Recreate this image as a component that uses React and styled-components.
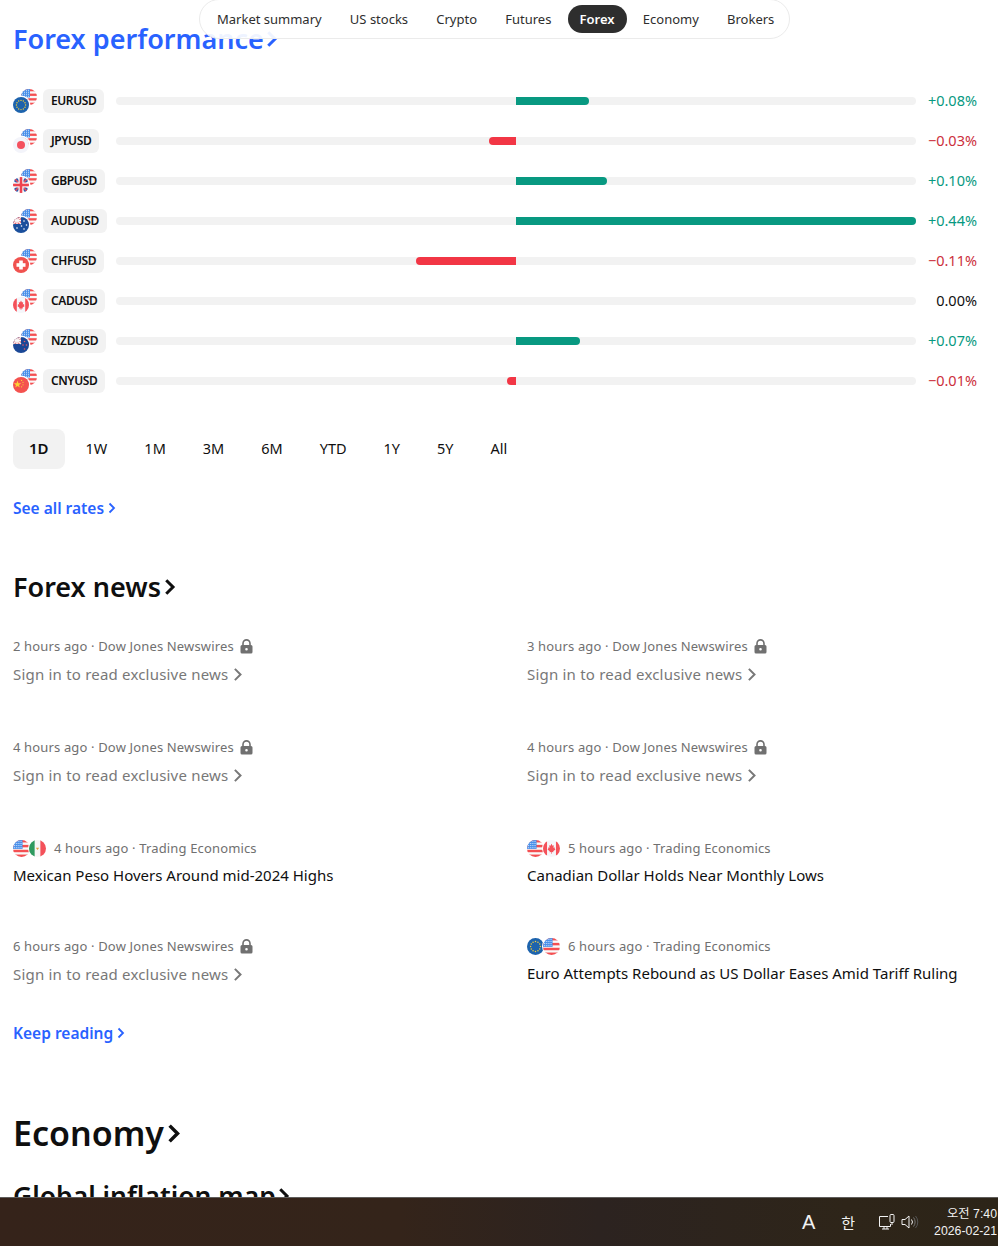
import React from "react";
import styled, { createGlobalStyle } from "styled-components";

const Global = createGlobalStyle`
  html, body { margin: 0; padding: 0; height: 100%; background: #fff; }
  body { font-family: "Noto Sans", "Liberation Sans", sans-serif; color: #0f0f0f; }
  #root { height: 100%; }
`;

const Screen = styled.div`
  position: relative;
  width: 998px;
  height: 1246px;
  display: flex;
  flex-direction: column;
  overflow: hidden;
`;
const Main = styled.main`
  flex: 1;
  min-height: 0;
  overflow: hidden;
  padding: 0 21px 0 13px;
  display: flex;
  flex-direction: column;
`;
const Nav = styled.nav`
  position: absolute;
  left: 199px;
  top: -1px;
  width: 591px;
  height: 40px;
  box-sizing: border-box;
  padding: 0 5px;
  display: flex;
  align-items: center;
  gap: 4.2px;
  background: rgba(255,255,255,.92);
  border: 1px solid #ebebeb;
  border-radius: 20px;
`;
const NavItem = styled.span`
  height: 28px;
  line-height: 28px;
  padding: 0 12px;
  border-radius: 14px;
  font-size: 13px;
  white-space: nowrap;
  color: ${p => (p.$active ? "#fff" : "#2e2e2e")};
  background: ${p => (p.$active ? "#2e2e2e" : "transparent")};
  font-weight: ${p => (p.$active ? 600 : 400)};
`;
const H1 = styled.h2`
  margin: 0;
  font-size: 27px;
  line-height: 36px;
  font-weight: 600;
  color: ${p => p.$color || "#0f0f0f"};
  display: flex;
  align-items: center;
`;
const PerfTitle = styled(H1)`
  margin-top: 21px;
  margin-bottom: 24px;
`;
const Chevron = styled.svg`
  flex: none;
  margin-left: ${p => p.$ml ?? 2}px;
`;
const Rows = styled.div`
  display: flex;
  flex-direction: column;
`;
const Row = styled.div`
  height: 40px;
  display: flex;
  align-items: center;
`;
const Pair = styled.div`
  position: relative;
  width: 24px;
  height: 24px;
  flex: none;
  margin-right: 6px;
`;
const PillWrap = styled.div`
  width: 73px;
  flex: none;
  display: flex;
  align-items: center;
`;
const Pill = styled.span`
  height: 24px;
  line-height: 23px;
  padding: 0 8px;
  border-radius: 6px;
  background: #f2f2f2;
  font-size: 12px;
  letter-spacing: -0.4px;
  font-weight: 600;
  color: #0f0f0f;
`;
const Track = styled.div`
  position: relative;
  width: 800px;
  height: 8px;
  flex: none;
  border-radius: 4px;
  background: #f2f2f2;
`;
const Fill = styled.div`
  position: absolute;
  top: 0;
  bottom: 0;
  background: ${p => (p.$up ? "#089981" : "#f23645")};
  ${p => (p.$up ? "left: 50%; border-radius: 0 4px 4px 0;" : "right: 50%; border-radius: 4px 0 0 4px;")}
`;
const Pct = styled.div`
  flex: 1;
  text-align: right;
  font-size: 14.5px;
  padding-bottom: 2px;
  color: ${p => (p.$v > 0 ? "#089981" : p.$v < 0 ? "#cc2f3c" : "#0f0f0f")};
`;
const Ranges = styled.div`
  margin-top: 28px;
  display: flex;
  gap: 5px;
`;
const Range = styled.span`
  height: 40px;
  line-height: 38px;
  padding: 0 16px;
  border-radius: 8px;
  font-size: ${p => (p.$active ? 15 : 14.5)}px;
  color: #0f0f0f;
  background: ${p => (p.$active ? "#f2f2f2" : "transparent")};
  font-weight: ${p => (p.$active ? 600 : 400)};
`;
const More = styled.a`
  display: flex;
  align-items: center;
  font-size: 15.5px;
  line-height: 24px;
  font-weight: 600;
  color: #2962ff;
`;
const SeeAll = styled(More)`
  margin-top: 27px;
`;
const NewsTitle = styled(H1)`
  margin-top: 49px;
`;
const News = styled.div`
  margin-top: 31px;
  display: grid;
  grid-template-columns: 514px 1fr;
`;
const Story = styled.article`
  height: ${p => p.$h}px;
`;
const Meta = styled.div`
  display: flex;
  align-items: center;
  height: 20px;
  font-size: 13px;
  letter-spacing: 0.15px;
  color: #707070;
  white-space: nowrap;
`;
const Headline = styled.div`
  margin-top: ${p => (p.$locked ? 7 : 6)}px;
  font-size: 15px;
  line-height: 22px;
  letter-spacing: ${p => (p.$locked ? 0.2 : 0)}px;
  white-space: nowrap;
  display: flex;
  align-items: center;
  color: ${p => (p.$locked ? "#787878" : "#0f0f0f")};
`;
const FlagGroup = styled.div`
  display: flex;
  flex: none;
  margin-right: 8px;
`;
const FlagCircle = styled.svg`
  display: block;
  flex: none;
  border-radius: 50%;
  overflow: hidden;
`;
const OverlapFlag = styled(FlagCircle)`
  margin-left: ${p => (p.$second ? -1 : 0)}px;
  box-shadow: ${p => (p.$second ? "0 0 0 1px #fff" : "none")};
  position: relative;
`;
const PairBack = styled(FlagCircle)`
  position: absolute;
  right: 0;
  top: 0;
`;
const PairFront = styled(FlagCircle)`
  position: absolute;
  left: 0;
  bottom: 0;
  box-shadow: 0 0 0 1.5px #fff;
`;
const Lock = styled.svg`
  margin-left: 6px;
  flex: none;
`;
const KeepReading = styled(More)`
  margin-top: 7px;
`;
const Economy = styled(H1)`
  margin-top: 66px;
  font-size: 34px;
  line-height: 44px;
`;
const SubTitle = styled(H1)`
  margin-top: 25px;
  font-size: 26.5px;
  line-height: 32px;
`;
const Taskbar = styled.footer`
  height: 49px;
  flex: none;
  box-sizing: border-box;
  border-top: 1px solid #5f5d5b;
  background: linear-gradient(90deg, #35231a 0%, #34241a 40%, #2c2320 60%, #2e2519 85%, #2c2418 100%);
  display: flex;
  align-items: center;
  justify-content: flex-end;
  color: #fff;
  font-family: "Noto Sans CJK KR", "Liberation Sans", sans-serif;
`;
const TrayText = styled.span`
  font-size: ${p => p.$size}px;
  font-family: ${p => (p.$latin ? '"Liberation Sans", sans-serif' : "inherit")};
  margin-right: ${p => p.$mr}px;
  color: #f2f2f2;
`;
const TrayIcon = styled.svg`
  flex: none;
  margin-right: ${p => p.$mr}px;
`;
const Clock = styled.div`
  display: flex;
  flex-direction: column;
  align-items: flex-end;
  font-size: 12.3px;
  line-height: 17px;
  color: #f2f2f2;
  font-family: "Liberation Sans", "Noto Sans CJK KR", sans-serif;
  margin: 2px 1px 0 0;
`;

const US = () => (
  <g>
    <rect width="16" height="16" fill="#f9f9f9" />
    <rect y="0" width="16" height="2.3" fill="#f44f52" />
    <rect y="4.6" width="16" height="2.3" fill="#f44f52" />
    <rect y="9.2" width="16" height="2.3" fill="#f44f52" />
    <rect y="13.7" width="16" height="2.3" fill="#f44f52" />
    <rect width="9" height="8.4" fill="#4a90ea" />
    {[1.5, 3.5, 5.5, 7.5].map(x => [1.2, 3.2, 5.2, 7.2].map(y => <rect key={x + "-" + y} x={x - .4} y={y - .4} width=".9" height=".9" fill="#e8f1fd" />))}
  </g>
);
const EU = () => (
  <g>
    <rect width="16" height="16" fill="#1d63ad" />
    {[0, 1, 2, 3, 4, 5, 6, 7, 8, 9, 10, 11].map(i => (
      <circle key={i} cx={8 + 4.6 * Math.cos((i * Math.PI) / 6)} cy={8 + 4.6 * Math.sin((i * Math.PI) / 6)} r=".7" fill="#f3cf3a" />
    ))}
  </g>
);
const JP = () => (
  <g>
    <rect width="16" height="16" fill="#f3f4fa" />
    <circle cx="8" cy="8" r="4" fill="#f4515f" />
  </g>
);
const GB = () => (
  <g>
    <rect width="16" height="16" fill="#f3f4fa" />
    <path d="M0 3 3 0 16 13 13 16ZM13 0 16 3 3 16 0 13Z" fill="#2a5bb0" />
    <path d="M0 1 1 0 16 15 15 16ZM15 0 16 1 1 16 0 15Z" fill="#ef4f58" />
    <rect x="5.5" width="5" height="16" fill="#f9f9f9" />
    <rect y="5.5" width="16" height="5" fill="#f9f9f9" />
    <rect x="6.7" width="2.6" height="16" fill="#ef4450" />
    <rect y="6.7" width="16" height="2.6" fill="#ef4450" />
  </g>
);
const AU = () => (
  <g>
    <rect width="16" height="16" fill="#1a4f9c" />
    <rect width="8" height="7" fill="#e9606a" />
    <path d="M0 0 8 7M8 0 0 7" stroke="#f5f5f5" strokeWidth="1.2" />
    <path d="M4 0V7M0 3.5H8" stroke="#f9f9f9" strokeWidth="1.4" />
    {[[11, 4], [13.5, 8], [11, 12], [8.5, 9], [4, 11]].map(([x, y]) => <circle key={x + "" + y} cx={x} cy={y} r=".8" fill="#fff" />)}
  </g>
);
const CH = () => (
  <g>
    <rect width="16" height="16" fill="#f0524f" />
    <rect x="6.2" y="3.5" width="3.6" height="9" fill="#fff" />
    <rect x="3.5" y="6.2" width="9" height="3.6" fill="#fff" />
  </g>
);
const CA = () => (
  <g>
    <rect width="16" height="16" fill="#f5f6fa" />
    <rect width="3.8" height="16" fill="#f4515a" />
    <rect x="12.2" width="3.8" height="16" fill="#f4515a" />
    <path d="M8 3.6 9 5.4 10.2 5 9.8 7.4 11.2 7 11 8.4 11.8 9 9.6 10.6 9.8 11.6 8.3 11.4V13H7.7V11.4L6.2 11.6 6.4 10.6 4.2 9 5 8.4 4.8 7 6.2 7.4 5.8 5 7 5.4Z" fill="#f4515a" />
  </g>
);
const NZ = () => (
  <g>
    <rect width="16" height="16" fill="#1a4796" />
    <rect width="8" height="7" fill="#d9808a" />
    <path d="M0 0 8 7M8 0 0 7" stroke="#f5f5f5" strokeWidth="1.2" />
    <path d="M4 0V7M0 3.5H8" stroke="#f9f9f9" strokeWidth="1.4" />
    {[[11.5, 4.5], [13.5, 8], [10, 8], [11.5, 12]].map(([x, y]) => <circle key={x + "" + y} cx={x} cy={y} r=".8" fill="#ef5a62" />)}
  </g>
);
const CN = () => (
  <g>
    <rect width="16" height="16" fill="#f4524f" />
    <path d="M4.5 3.6 5.4 6.3 8.2 6.3 6 8 6.8 10.6 4.5 9 2.2 10.6 3 8 .8 6.3 3.6 6.3Z" fill="#fbd335" />
    <circle cx="8.6" cy="3.4" r=".6" fill="#fbd335" />
    <circle cx="10" cy="5.3" r=".6" fill="#fbd335" />
    <circle cx="10" cy="7.8" r=".6" fill="#fbd335" />
    <circle cx="8.6" cy="9.8" r=".6" fill="#fbd335" />
  </g>
);
const MX = () => (
  <g>
    <rect width="16" height="16" fill="#f6f6f6" />
    <rect width="5.3" height="16" fill="#2e9a5f" />
    <rect x="10.7" width="5.3" height="16" fill="#f4515a" />
    <path d="M6.4 7.2h3.2L8 9.4Z" fill="#e4a23a" />
  </g>
);
const FLAGS = { US, EU, JP, GB, AU, CH, CA, NZ, CN, MX };

const Flag = ({ code, as: As = FlagCircle, size = 16, ...rest }) => {
  const F = FLAGS[code];
  return (
    <As width={size} height={size} viewBox="0 0 16 16" {...rest}>
      <F />
    </As>
  );
};

const Chev = ({ w = 8, h = 12, sw = 2, ml }) => (
  <Chevron $ml={ml} width={w} height={h} viewBox="0 0 8 12" fill="none">
    <path d="M1.5 1.5 6 6 1.5 10.5" stroke="currentColor" strokeWidth={sw} />
  </Chevron>
);

const LockIcon = () => (
  <Lock width="13" height="15" viewBox="0 0 13 15">
    <path d="M3 6.5V4.4a3.5 3.5 0 0 1 7 0v2.1" fill="none" stroke="#707070" strokeWidth="1.6" />
    <path fillRule="evenodd" d="M2 6h9a1.5 1.5 0 0 1 1.5 1.5V13a1.5 1.5 0 0 1-1.5 1.5H2A1.5 1.5 0 0 1 .5 13V7.500A1.500 1.500 0 0 1 2 6Zm4.500 2.900a1.300 1.300 0 1 0 0 2.600 1.300 1.300 0 0 0 0-2.600Z" fill="#707070" />
  </Lock>
);

const NAV = ["Market summary", "US stocks", "Crypto", "Futures", "Forex", "Economy", "Brokers"];
const RATES = [
  ["EU", "EURUSD", 73, 0.08, "+0.08%"],
  ["JP", "JPYUSD", 27, -0.03, "−0.03%"],
  ["GB", "GBPUSD", 91, 0.1, "+0.10%"],
  ["AU", "AUDUSD", 400, 0.44, "+0.44%"],
  ["CH", "CHFUSD", 100, -0.11, "−0.11%"],
  ["CA", "CADUSD", 0, 0, "0.00%"],
  ["NZ", "NZDUSD", 64, 0.07, "+0.07%"],
  ["CN", "CNYUSD", 9, -0.01, "−0.01%"],
];
const RANGES = ["1D", "1W", "1M", "3M", "6M", "YTD", "1Y", "5Y", "All"];
const LOCKED = "Sign in to read exclusive news";
const STORIES = [
  { time: "2 hours ago", src: "Dow Jones Newswires", h: 101 },
  { time: "3 hours ago", src: "Dow Jones Newswires", h: 101 },
  { time: "4 hours ago", src: "Dow Jones Newswires", h: 101 },
  { time: "4 hours ago", src: "Dow Jones Newswires", h: 101 },
  { time: "4 hours ago", src: "Trading Economics", flags: ["US", "MX"], title: "Mexican Peso Hovers Around mid-2024 Highs", h: 98 },
  { time: "5 hours ago", src: "Trading Economics", flags: ["US", "CA"], title: "Canadian Dollar Holds Near Monthly Lows", h: 98 },
  { time: "6 hours ago", src: "Dow Jones Newswires", h: 78 },
  { time: "6 hours ago", src: "Trading Economics", flags: ["EU", "US"], title: "Euro Attempts Rebound as US Dollar Eases Amid Tariff Ruling", h: 78 },
];

export default function App() {
  return (
    <Screen>
      <Global />
      <Main>
        <PerfTitle $color="#2962ff">Forex performance<Chev w={12} h={18} sw={2} ml={2} /></PerfTitle>
        <Rows>
          {RATES.map(([code, name, w, v, label]) => (
            <Row key={name}>
              <Pair>
                <Flag code="US" as={PairBack} />
                <Flag code={code} as={PairFront} />
              </Pair>
              <PillWrap><Pill>{name}</Pill></PillWrap>
              <Track>{w > 0 && <Fill $up={v > 0} style={{ width: w }} />}</Track>
              <Pct $v={v}>{label}</Pct>
            </Row>
          ))}
        </Rows>
        <Ranges>
          {RANGES.map((r, i) => <Range key={r} $active={i === 0}>{r}</Range>)}
        </Ranges>
        <SeeAll>See all rates<Chev w={8} h={12} sw={1.8} ml={4} /></SeeAll>
        <NewsTitle>Forex news<Chev w={12} h={18} sw={2} ml={3} /></NewsTitle>
        <News>
          {STORIES.map((s, i) => (
            <Story key={i} $h={s.h}>
              <Meta>
                {s.flags && (
                  <FlagGroup>
                    <Flag code={s.flags[0]} as={OverlapFlag} size={17} />
                    <Flag code={s.flags[1]} as={OverlapFlag} size={17} $second />
                  </FlagGroup>
                )}
                {s.time} · {s.src}
                {!s.flags && <LockIcon />}
              </Meta>
              <Headline $locked={!s.flags}>
                {s.title || LOCKED}
                {!s.flags && <Chev w={10} h={15} sw={1.6} ml={5} />}
              </Headline>
            </Story>
          ))}
        </News>
        <KeepReading>Keep reading<Chev w={8} h={12} sw={1.8} ml={4} /></KeepReading>
        <Economy>Economy<Chev w={14} h={21} sw={2} ml={3} /></Economy>
        <SubTitle>Global inflation map<Chev w={12} h={18} sw={2} ml={2} /></SubTitle>
      </Main>
      <Nav>
        {NAV.map(n => <NavItem key={n} $active={n === "Forex"}>{n}</NavItem>)}
      </Nav>
      <Taskbar>
        <TrayText $latin $size={20} $mr={26}>A</TrayText>
        <TrayText $size={15} $mr={23}>한</TrayText>
        <TrayIcon $mr={5} width="18" height="18" viewBox="0 0 18 18" fill="none" stroke="#f2f2f2" strokeWidth="1">
          <path d="M10 3.500H1.500V13.500H12.500V11M4 16h7M6 13.500V16M9 13.500V16" />
          <rect x="12" y="1.500" width="4" height="8" rx="1" />
          <path d="M14 9.500V12" />
        </TrayIcon>
        <TrayIcon $mr={15} width="18" height="16" viewBox="0 0 18 16" fill="none" stroke="#f2f2f2" strokeWidth="1">
          <path d="M1 5.500H4L8 2V14L4 10.500H1Z" />
          <path d="M10.500 5.500a4 4 0 0 1 0 5" />
          <path d="M12.500 3.500a7 7 0 0 1 0 9" stroke="#777" />
          <path d="M14.500 2a9 9 0 0 1 0 12" stroke="#555" />
        </TrayIcon>
        <Clock>
          <span>오전 7:40</span>
          <span>2026-02-21</span>
        </Clock>
      </Taskbar>
    </Screen>
  );
}
